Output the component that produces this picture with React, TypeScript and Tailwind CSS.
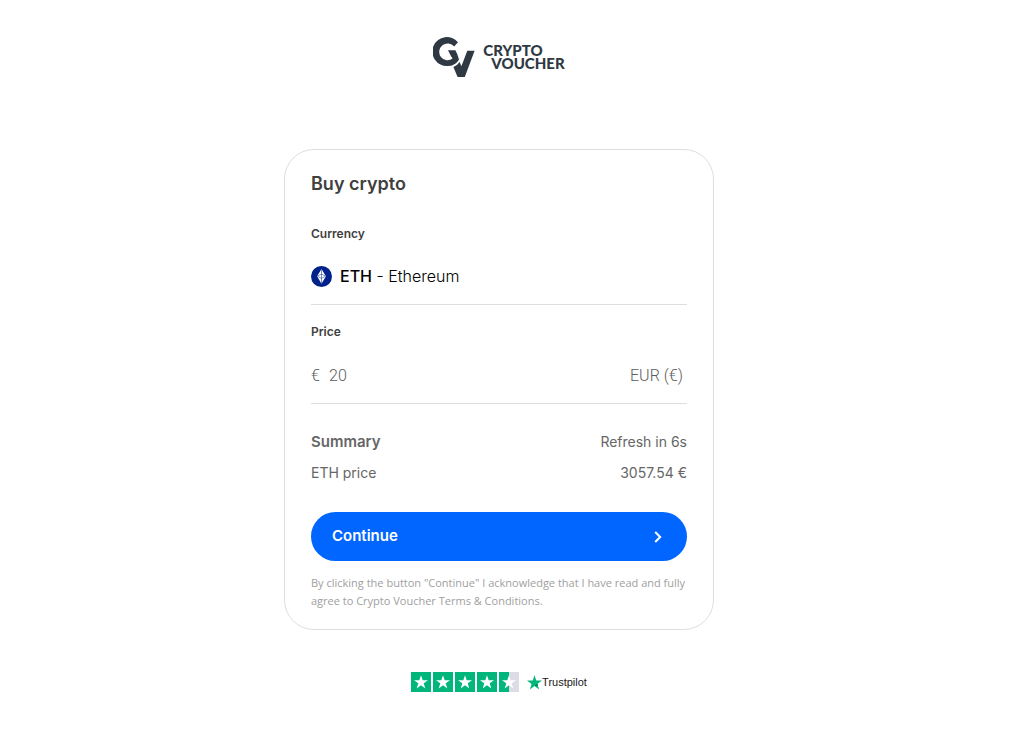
import { useState } from "react";

function LogoMark() {
  return (
    <svg viewBox="0 0 42 40" className="h-10 w-[42px] shrink-0" fill="#2f3943" aria-hidden="true">
      <path d="M25 5.2 21.2 9.6A8.4 8.4 0 1 0 19.6 21.6L18.2 19.6 15 13.2H22.4L24.4 17.6 26 22.4Q22.6 29 14.5 29A14.5 14.5 0 1 1 25 5.2Z" />
      <path d="M20.4 30Q24.6 28.4 26.6 25L28.4 29.2 34.3 13.8H41.6L31.8 40H24.6Z" />
    </svg>
  );
}

function EthIcon() {
  return (
    <svg viewBox="0 0 21 21" className="size-[21px] shrink-0" aria-hidden="true">
      <circle cx="10.5" cy="10.5" r="10.5" fill="#00208c" />
      <path d="M10.5 3 14.9 10.2 10.5 17.8 6.1 10.2Z" fill="#fff" />
      <path d="M10.5 3.5V17M6.5 10.2 10.5 12.4 14.5 10.2M6.8 9.8 10.5 8.2 14.2 9.8" fill="none" stroke="#00208c" strokeWidth="0.5" />
    </svg>
  );
}

const STAR = "M10 3.2 11.7 8.2H17L12.7 11.3 14.3 16.4 10 13.3 5.7 16.4 7.3 11.3 3 8.2H8.3Z";

function RatingStar({ half = false }: { half?: boolean }) {
  return (
    <svg viewBox="0 0 20 20" className="size-5" aria-hidden="true">
      <rect width="20" height="20" fill={half ? "#dcdce6" : "#00b67a"} />
      {half && <rect width="10" height="20" fill="#00b67a" />}
      <path d={STAR} fill="#fff" />
    </svg>
  );
}

export default function App() {
  const [price, setPrice] = useState("20");

  return (
    <div className="flex min-h-screen flex-col items-center bg-white pt-[37px] pr-8 font-['Inter','Liberation_Sans',sans-serif]">
      <header className="flex h-10 items-center gap-2 text-[#2f3943]">
        <LogoMark />
        <p className="pl-2 -indent-2 font-['Lato',sans-serif] text-[15px] leading-[13px] font-black">
          CRYPTO
          <br />
          VOUCHER
        </p>
      </header>

      <main className="mt-[72px] w-full max-w-[430px] rounded-[30px] border border-[#dedede] px-[26px] pt-5 pb-[19px]">
        <form onSubmit={(e) => e.preventDefault()}>
          <h1 className="text-[18px] leading-7 font-semibold text-[#404040]">Buy crypto</h1>

          <label htmlFor="currency" className="mt-[26px] block text-[12px] leading-5 font-semibold text-[#404040]">
            Currency
          </label>
          <button
            id="currency"
            type="button"
            className="mt-2 flex h-[53px] w-full items-center gap-2 border-b border-[#dedede] pb-1 text-[16px] text-black"
          >
            <EthIcon />
            <span className="font-light">
              <span className="font-medium">ETH</span> - Ethereum
            </span>
          </button>

          <label htmlFor="price" className="mt-[17px] block text-[12px] leading-5 font-semibold text-[#404040]">
            Price
          </label>
          <div className="mt-2 flex h-[54px] items-center border-b border-[#dedede] pb-[2px] font-['Roboto',sans-serif] text-[16px] font-light text-[#5c5c5c]">
            <span className="w-[18px]">€</span>
            <input
              id="price"
              inputMode="decimal"
              value={price}
              onChange={(e) => setPrice(e.target.value)}
              className="min-w-0 flex-1 bg-transparent outline-none"
            />
            <select aria-label="Price currency" className="appearance-none bg-transparent pr-1 outline-none">
              <option>EUR (€)</option>
            </select>
          </div>

          <div className="mt-7 flex justify-between text-[14px] leading-5 text-[#666]">
            <span className="text-[15px] font-semibold">Summary</span>
            <span>Refresh in 6s</span>
          </div>
          <div className="mt-[11px] flex justify-between text-[14px] leading-5 text-[#666]">
            <span>ETH price</span>
            <span>3057.54 €</span>
          </div>

          <button
            type="submit"
            className="mt-[29px] flex h-[49px] w-full items-center justify-between rounded-full bg-[#0066ff] pr-[25px] pl-[21px] text-[15px] font-semibold text-white"
          >
            Continue
            <svg viewBox="0 0 8 12" className="h-3 w-2" fill="none" stroke="currentColor" strokeWidth="2" aria-hidden="true">
              <path d="M1.2 1 6.2 6 1.2 11" />
            </svg>
          </button>

          <p className="mt-[13px] font-['Open_Sans','Liberation_Sans',sans-serif] text-[11px] leading-[18px] text-[#a0a0a0]">
            By clicking the button "Continue" I acknowledge that I have read and fully agree to Crypto Voucher Terms &amp; Conditions.
          </p>
        </form>
      </main>

      <footer className="mt-[42px] flex items-center gap-2">
        <div className="flex gap-[2px]" role="img" aria-label="4.5 out of 5 stars">
          <RatingStar />
          <RatingStar />
          <RatingStar />
          <RatingStar />
          <RatingStar half />
        </div>
        <div className="flex items-center text-[#191919]">
          <svg viewBox="0 0 15 15" className="size-[15px]" aria-hidden="true">
            <path d="M7.5 0 9.2 5.5H15L10.4 8.9 12.1 14.4 7.5 11 2.9 14.4 4.6 8.9 0 5.5H5.8Z" fill="#00b67a" />
            <path d="M10.4 8.9 10.9 10.3 7.5 11Z" fill="#005128" />
          </svg>
          <span className="font-['Liberation_Sans',sans-serif] text-[11px] leading-4">Trustpilot</span>
        </div>
      </footer>
    </div>
  );
}
